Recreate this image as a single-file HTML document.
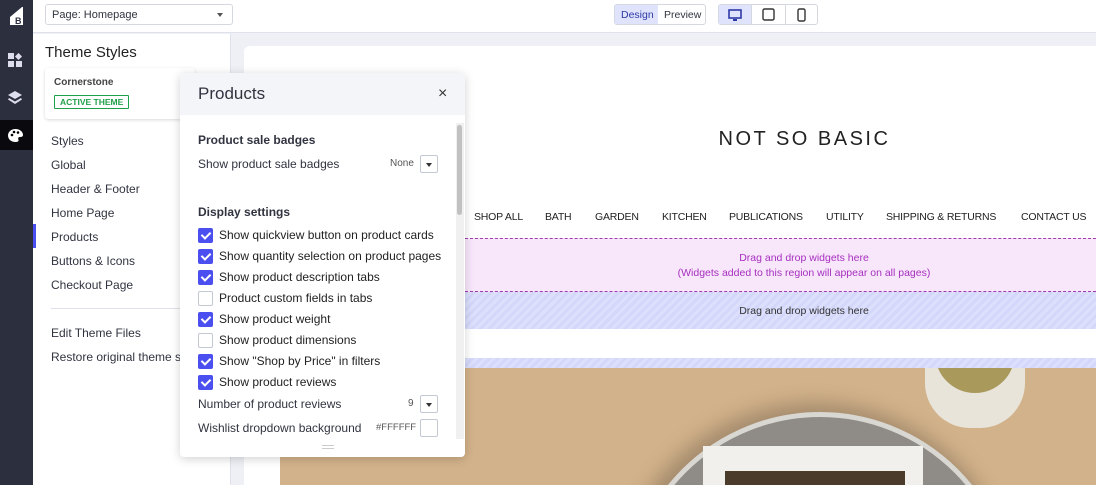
<!DOCTYPE html>
<html style="overflow:hidden"><head><style>
*{box-sizing:border-box;margin:0;padding:0}
html,body{width:1096px;height:485px;overflow:hidden}
body{position:relative;font-family:"Liberation Sans",sans-serif;background:#eef0f5;color:#313440}
.abs{position:absolute}
.ic{position:absolute;left:0;width:33px;background:#2c2f3d}
.nav span{position:absolute;top:211px;font-size:10.5px;color:#222;letter-spacing:-.2px}
.list div{position:absolute;left:51px;font-size:12px;color:#313440}
.cb{position:absolute;left:198px;width:15px;height:15px;border-radius:2px;background:#4b4ff0}
.cb.off{background:#fff;border:1px solid #c4c8d3}
.cb:not(.off)::after{content:"";position:absolute;left:5px;top:2px;width:4px;height:7px;border:solid #fff;border-width:0 2px 2px 0;transform:rotate(45deg)}
.lbl{position:absolute;left:219px;font-size:12px;color:#222}
.sel{position:absolute;left:420px;width:18px;height:18px;border:1px solid #c4c8d3;border-radius:2px;background:#fff}
.sel::after{content:"";position:absolute;left:5px;top:7px;border:3px solid transparent;border-top:4px solid #333}
</style></head><body>
<div class="ic" style="top:0;height:485px"></div>
<div class="abs" style="left:0;top:120px;width:33px;height:30px;background:#0a0a0e"></div>
<svg class="abs" style="left:6px;top:5px" width="22" height="22" viewBox="0 0 22 22"><path d="M16 2 L4 12 V20 H17 V2Z" fill="#fff"/><text x="9" y="19" font-size="9" font-weight="bold" fill="#2c2f3d" font-family="Liberation Sans">B</text></svg>
<svg class="abs" style="left:8px;top:53px" width="14" height="14"><rect x="0" y="0" width="6" height="6" fill="#dde"/><rect x="0" y="8" width="6" height="6" fill="#dde"/><rect x="8" y="8" width="6" height="6" fill="#dde"/><rect x="8" y="1" width="5" height="5" fill="#dde" transform="rotate(45 10.5 3.5)"/></svg>
<svg class="abs" style="left:8px;top:91px" width="14" height="14"><path d="M7 0 L14 4 L7 8 L0 4Z" fill="#dde"/><path d="M1 7 L7 10.5 L13 7 L14 8.5 L7 13 L0 8.5Z" fill="#dde"/></svg>
<svg class="abs" style="left:8px;top:129px" width="15" height="13"><path d="M7.5 0 C12 0 15 3 15 6 C15 8 13 8 11.5 8 C10 8 10 10 10.5 11 C11 12.5 9 13 7.5 13 C3 13 0 10 0 6.5 C0 3 3 0 7.5 0Z" fill="#fff"/><circle cx="4" cy="6" r="1.3" fill="#000"/><circle cx="6" cy="3" r="1.3" fill="#000"/><circle cx="10" cy="3.5" r="1.3" fill="#000"/></svg>
<div class="abs" style="left:33px;top:0;width:1063px;height:33px;background:#fff;border-bottom:1px solid #dfe2ea"></div>
<div class="abs" style="left:45px;top:4px;width:188px;height:21px;border:1px solid #d5d8e0;border-radius:3px;font-size:11px;padding:4px 6px;color:#313440">Page: Homepage<span style="position:absolute;right:9px;top:8px;border:3.5px solid transparent;border-top:4px solid #555"></span></div>
<div class="abs" style="left:614px;top:4px;width:92px;height:21px;border:1px solid #d5d8e0;border-radius:3px;font-size:10.5px;background:#fff">
<div class="abs" style="left:0;top:0;width:43px;height:19px;background:#dfe3fb;color:#2f3aa8;padding:4px 0 0 6px">Design</div>
<div class="abs" style="left:49px;top:4px;color:#313440">Preview</div></div>
<div class="abs" style="left:718px;top:4px;width:100px;height:21px;border:1px solid #d5d8e0;border-radius:3px;background:#fff">
<div class="abs" style="left:0;top:0;width:33px;height:19px;background:#dfe3fb;border-right:1px solid #d5d8e0"></div>
<div class="abs" style="left:66px;top:0;width:1px;height:19px;background:#d5d8e0"></div>
<svg class="abs" style="left:9px;top:4px" width="14" height="12"><rect x="1" y="1" width="12" height="8" fill="none" stroke="#2f3aa8" stroke-width="1.6"/><rect x="5" y="10" width="4" height="2" fill="#2f3aa8"/></svg>
<svg class="abs" style="left:43px;top:3px" width="13" height="13"><rect x="1" y="1" width="11" height="11" rx="1.5" fill="none" stroke="#333" stroke-width="1.4"/></svg>
<svg class="abs" style="left:78px;top:3px" width="9" height="14"><rect x="1" y="1" width="7" height="12" rx="1.5" fill="none" stroke="#333" stroke-width="1.4"/></svg>
</div>
<div class="abs" style="left:33px;top:34px;width:198px;height:451px;background:#fff;border-right:1px solid #dfe2ea"></div>
<div class="abs" style="left:45px;top:44px;font-size:15px;color:#222">Theme Styles</div>
<div class="abs" style="left:45px;top:68px;width:150px;height:51px;background:#fff;box-shadow:0 1px 3px rgba(0,0,0,.15);border-radius:3px"></div>
<div class="abs" style="left:54px;top:77px;font-size:10px;font-weight:bold;color:#444">Cornerstone</div>
<div class="abs" style="left:54px;top:95px;border:1px solid #1fa04a;color:#1fa04a;font-size:8.5px;font-weight:bold;padding:1px 5px;border-radius:1px">ACTIVE THEME</div>
<div class="list">
<div style="top:134px">Styles</div><div style="top:158px">Global</div><div style="top:182px">Header &amp; Footer</div><div style="top:206px">Home Page</div><div style="top:230px">Products</div><div style="top:254px">Buttons &amp; Icons</div><div style="top:278px">Checkout Page</div><div style="top:326px">Edit Theme Files</div><div style="top:350px;white-space:nowrap">Restore original theme sty</div></div>
<div class="abs" style="left:33px;top:224px;width:3px;height:24px;background:#4b4ff0"></div>
<div class="abs" style="left:51px;top:308px;width:130px;height:1px;background:#dfe2ea"></div>
<div class="abs" style="left:244px;top:46px;width:852px;height:439px;background:#fff;border-radius:6px 0 0 0"></div>
<div class="abs" style="left:244px;top:128px;width:852px;text-align:center;font-size:20px;letter-spacing:2.5px;color:#222;padding-left:269px">NOT SO BASIC</div>
<div class="nav"><span style="left:474px">SHOP ALL</span><span style="left:545px">BATH</span><span style="left:595px">GARDEN</span><span style="left:662px">KITCHEN</span><span style="left:729px">PUBLICATIONS</span><span style="left:826px">UTILITY</span><span style="left:886px">SHIPPING &amp; RETURNS</span><span style="left:1021px">CONTACT US</span></div>
<div class="abs" style="left:460px;top:238px;width:636px;height:54px;background:#f8e6fb;border-top:1px dashed #a03cae;border-bottom:1px dashed #a03cae;text-align:center;font-size:10.5px;color:#a62fbf;line-height:15px;padding-top:12px;padding-left:52px">Drag and drop widgets here<br>(Widgets added to this region will appear on all pages)</div>
<div class="abs" style="left:460px;top:292px;width:636px;height:37px;background:repeating-linear-gradient(135deg,#dde0fc 0 3px,#d3d7fa 3px 6px);text-align:center;font-size:10.5px;color:#333;padding-top:13px;padding-left:52px">Drag and drop widgets here</div>
<div class="abs" style="left:280px;top:358px;width:816px;height:10px;background:repeating-linear-gradient(135deg,#dde0fc 0 3px,#d3d7fa 3px 6px)"></div>
<div class="abs" style="left:280px;top:368px;width:816px;height:117px;background:#d2b28a;overflow:hidden">
<div class="abs" style="left:335px;top:35px;width:400px;height:400px;border-radius:50%;background:#6b5a48;filter:blur(10px);opacity:.45"></div>
<div class="abs" style="left:345px;top:44px;width:390px;height:390px;border-radius:50%;background:#8f8b87;border:5px solid #d9d7d2"></div>
<div class="abs" style="left:423px;top:78px;width:220px;height:60px;background:#f1f0ec"></div>
<div class="abs" style="left:445px;top:103px;width:180px;height:20px;background:#4a3b2a"></div>
<div class="abs" style="left:645px;top:-20px;width:100px;height:80px;border-radius:0 0 45px 45px;background:#e9e4da"></div>
<div class="abs" style="left:655px;top:-20px;width:80px;height:45px;border-radius:0 0 40px 40px;background:#a99a5c"></div>
</div>
<div class="abs" style="left:180px;top:73px;width:285px;height:384px;background:#fff;border-radius:4px;box-shadow:0 2px 10px rgba(0,0,0,.18);overflow:hidden">
<div class="abs" style="left:0;top:0;width:285px;height:42px;background:#f4f5f9"></div>
<div class="abs" style="left:18px;top:11px;font-size:17px;color:#313440">Products</div>
<div class="abs" style="left:258px;top:12px;font-size:16px;color:#333">×</div>
<div class="abs" style="left:276px;top:50px;width:8px;height:316px;background:#f0f0f0"></div>
<div class="abs" style="left:277px;top:52px;width:5px;height:90px;background:#c1c1c1;border-radius:3px"></div>
<div class="abs" style="left:142px;top:372px;width:12px;height:4px;border-top:1px solid #ccc;border-bottom:1px solid #ccc"></div>
</div>
<div class="abs" style="left:198px;top:133px;font-size:12px;font-weight:bold;color:#313440">Product sale badges</div>
<div class="abs" style="left:198px;top:157px;font-size:12px;color:#313440">Show product sale badges</div>
<div class="abs" style="left:390px;top:158px;font-size:10px;color:#555">None</div>
<div class="sel" style="top:155px"></div>
<div class="abs" style="left:198px;top:205px;font-size:12px;font-weight:bold;color:#313440">Display settings</div>
<div class="cb" style="top:228px"></div><div class="lbl" style="top:228px">Show quickview button on product cards</div>
<div class="cb" style="top:249px"></div><div class="lbl" style="top:249px">Show quantity selection on product pages</div>
<div class="cb" style="top:270px"></div><div class="lbl" style="top:270px">Show product description tabs</div>
<div class="cb off" style="top:291px"></div><div class="lbl" style="top:291px">Product custom fields in tabs</div>
<div class="cb" style="top:312px"></div><div class="lbl" style="top:312px">Show product weight</div>
<div class="cb off" style="top:333px"></div><div class="lbl" style="top:333px">Show product dimensions</div>
<div class="cb" style="top:354px"></div><div class="lbl" style="top:354px">Show "Shop by Price" in filters</div>
<div class="cb" style="top:375px"></div><div class="lbl" style="top:375px">Show product reviews</div>
<div class="abs" style="left:198px;top:397px;font-size:12px;color:#313440">Number of product reviews</div>
<div class="abs" style="left:408px;top:398px;font-size:10px;color:#555">9</div>
<div class="sel" style="top:395px"></div>
<div class="abs" style="left:198px;top:421px;font-size:12px;color:#313440">Wishlist dropdown background</div>
<div class="abs" style="left:376px;top:422px;font-size:9.5px;color:#555">#FFFFFF</div>
<div class="abs" style="left:420px;top:419px;width:18px;height:18px;border:1px solid #c4c8d3;border-radius:2px;background:#fff"></div>
</body></html>
